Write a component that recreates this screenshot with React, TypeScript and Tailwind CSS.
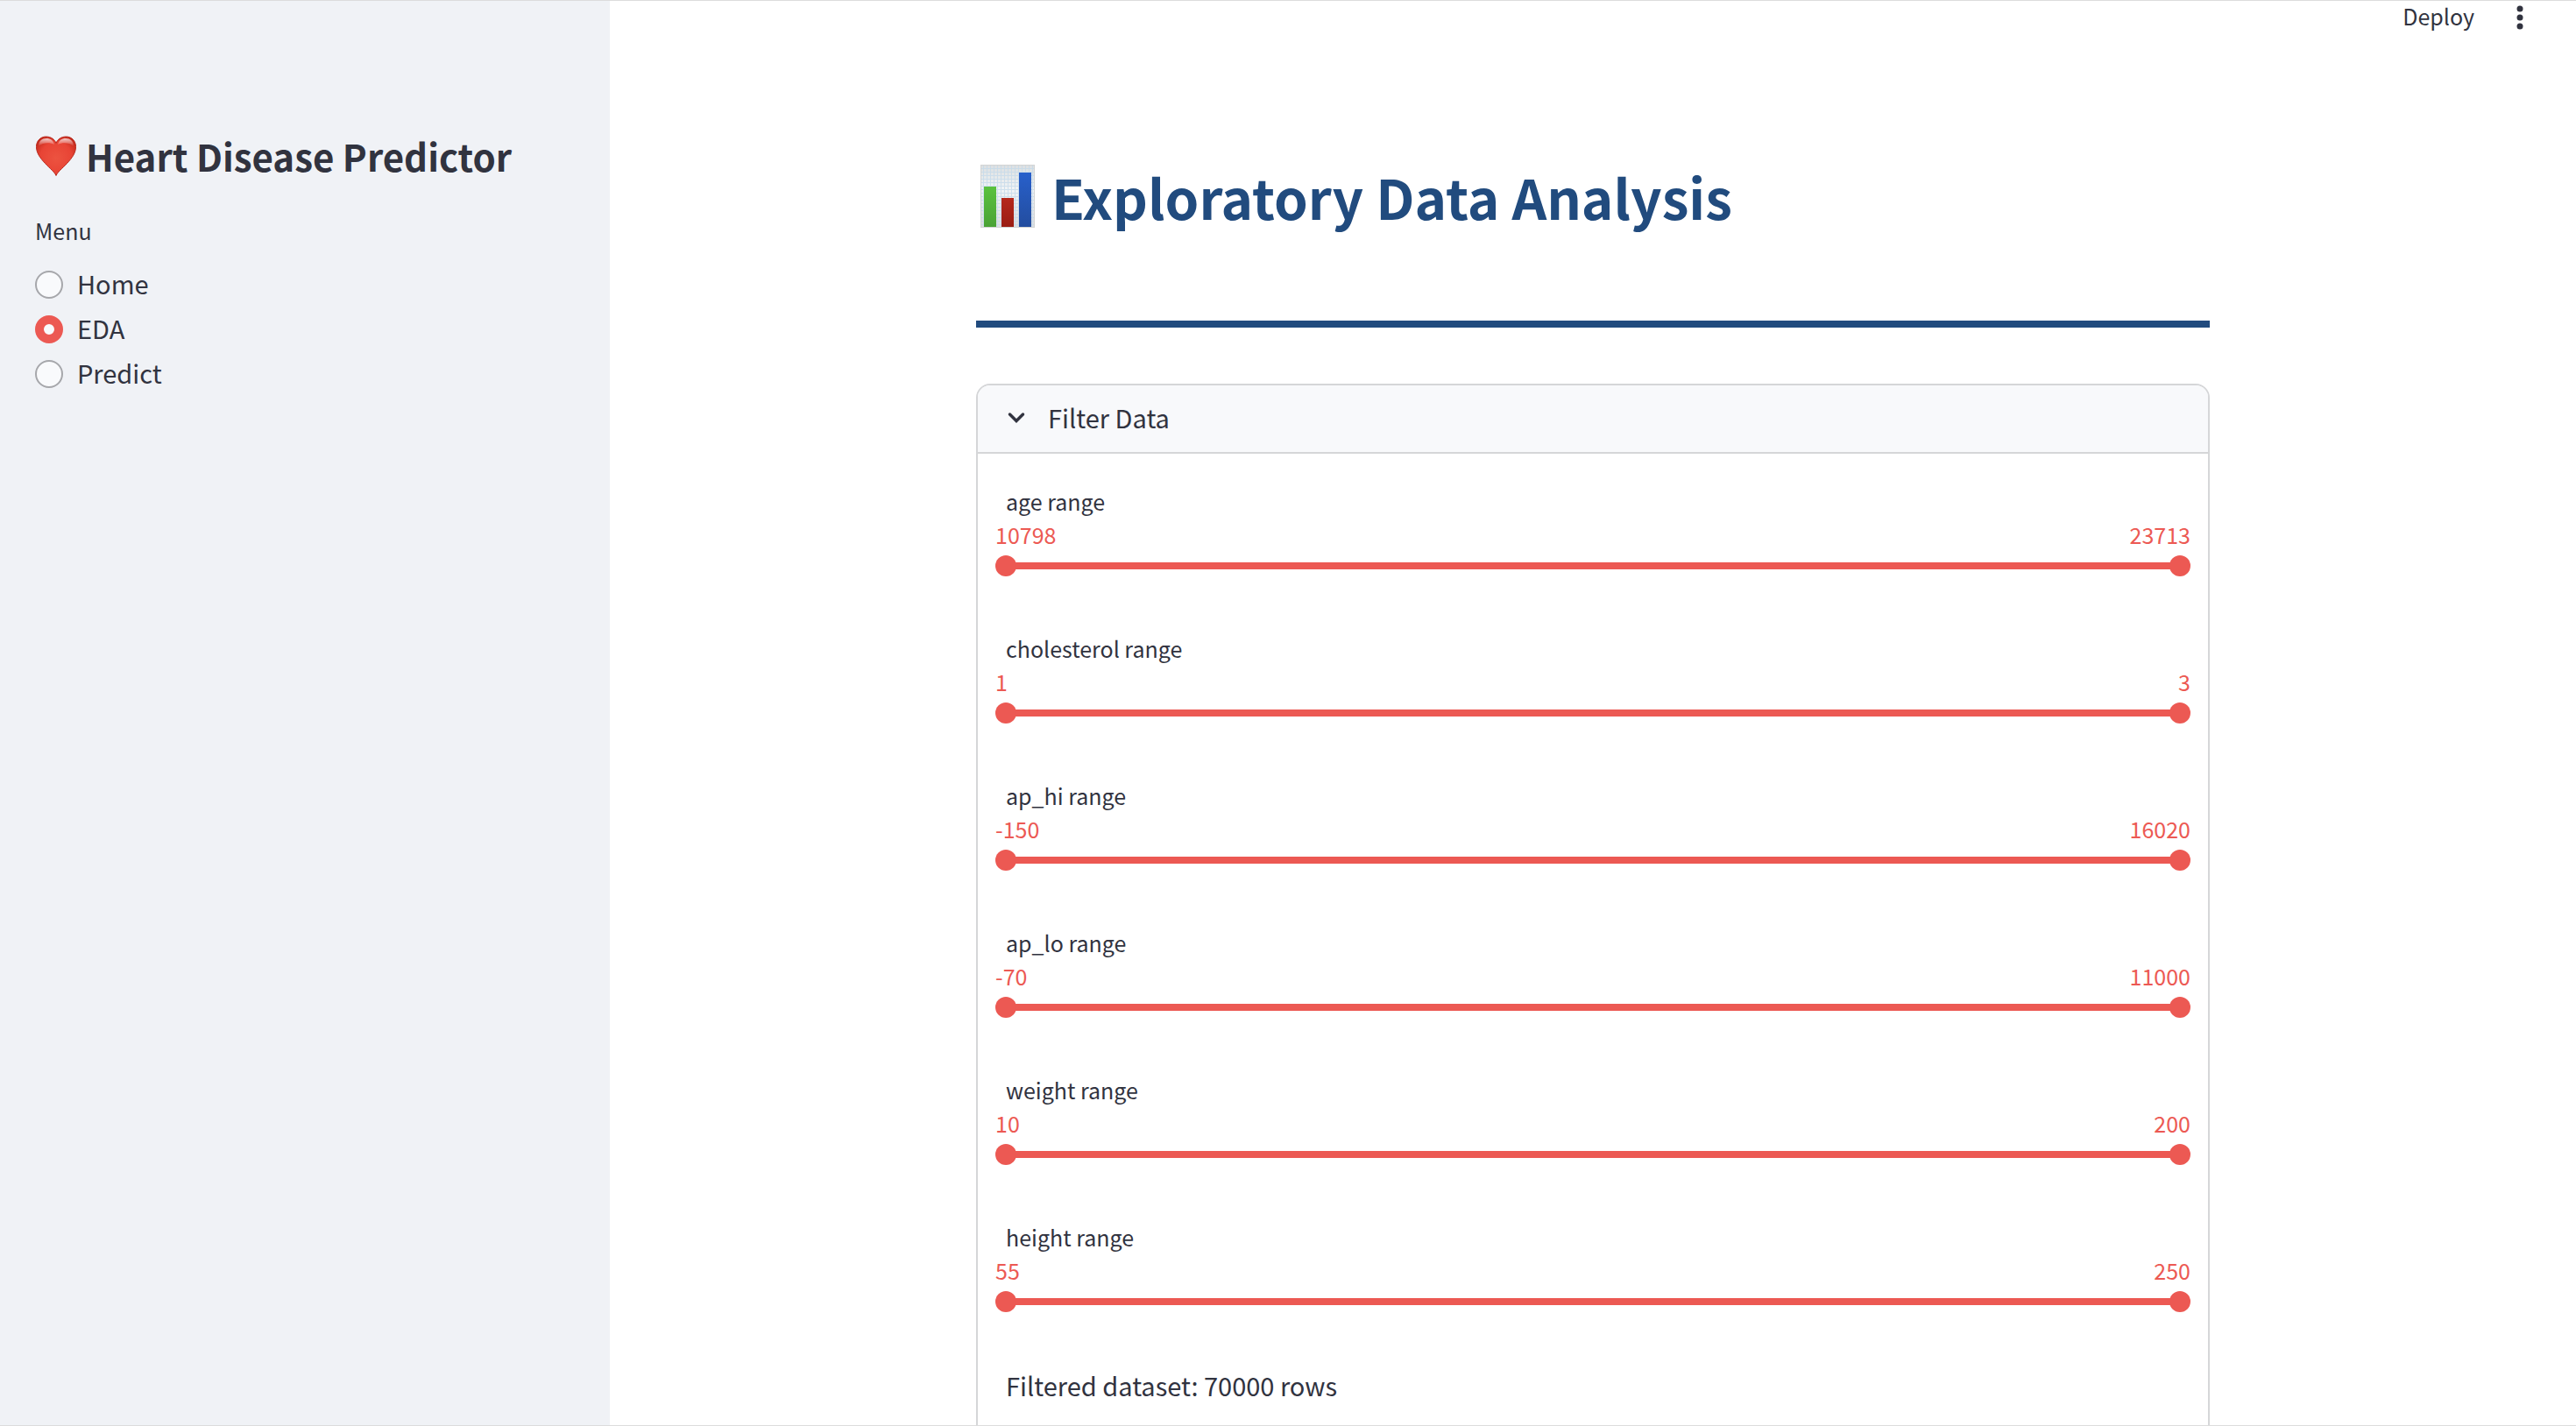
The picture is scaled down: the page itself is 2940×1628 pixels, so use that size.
import { useState } from "react";

type Feature = { name: string; min: number; max: number };

const FEATURES: Feature[] = [
  { name: "age", min: 10798, max: 23713 },
  { name: "cholesterol", min: 1, max: 3 },
  { name: "ap_hi", min: -150, max: 16020 },
  { name: "ap_lo", min: -70, max: 11000 },
  { name: "weight", min: 10, max: 200 },
  { name: "height", min: 55, max: 250 },
];

const PAGES = ["Home", "EDA", "Predict"];

const THUMB_INPUT =
  "pointer-events-none absolute inset-0 m-0 h-6 w-full appearance-none bg-transparent outline-none [&::-webkit-slider-thumb]:pointer-events-auto [&::-webkit-slider-thumb]:size-6 [&::-webkit-slider-thumb]:cursor-pointer [&::-webkit-slider-thumb]:appearance-none [&::-webkit-slider-thumb]:rounded-full [&::-webkit-slider-thumb]:bg-[#ec5953]";

function HeartIcon() {
  return (
    <svg viewBox="0 0 48 48" className="size-12 shrink-0" aria-hidden="true">
      <defs>
        <radialGradient id="heart-fill" cx="0.5" cy="0.55" r="0.62">
          <stop offset="0" stopColor="#ec5340" />
          <stop offset="0.65" stopColor="#e84435" />
          <stop offset="1" stopColor="#c42a1c" />
        </radialGradient>
        <linearGradient id="heart-shine" x1="0" y1="0" x2="0" y2="1">
          <stop offset="0" stopColor="#ffffff" stopOpacity="0.75" />
          <stop offset="1" stopColor="#ffffff" stopOpacity="0" />
        </linearGradient>
      </defs>
      <path
        d="M24 46.500C22.500 42.500 17 38.500 11.500 32.500C5.500 26 1.500 20.500 1.500 13.500C1.500 6.500 6.500 2 12.500 2C18 2 22.500 5 24 9.500C25.500 5 30 2 35.500 2C41.500 2 46.500 6.500 46.500 13.500C46.500 20.500 42.500 26 36.500 32.500C31 38.500 25.500 42.500 24 46.500Z"
        fill="url(#heart-fill)"
        stroke="#b92a1e"
        strokeWidth="1"
      />
      <path d="M4 13C4 7 8 4 13 4C17.500 4 21 6.500 22 11C17 8.500 9 8.500 4 13Z" fill="url(#heart-shine)" />
      <path d="M44 13C44 7 40 4 35 4C30.500 4 27 6.500 26 11C31 8.500 39 8.500 44 13Z" fill="url(#heart-shine)" />
    </svg>
  );
}

function BarChartIcon() {
  return (
    <svg viewBox="0 0 64 72" className="h-[72px] w-16 shrink-0" aria-hidden="true">
      <defs>
        <pattern id="chart-grid" width="4" height="4" patternUnits="userSpaceOnUse">
          <path d="M0 .5H4M.5 0V4" stroke="#c3d9ea" strokeWidth="1" />
        </pattern>
        <linearGradient id="chart-paper" x1="0" y1="0" x2="0" y2="1">
          <stop offset="0" stopColor="#dcdfe0" />
          <stop offset="0.4" stopColor="#f1f4f6" />
          <stop offset="1" stopColor="#dddddf" />
        </linearGradient>
        <linearGradient id="chart-green" x1="0" y1="0" x2="0" y2="1">
          <stop offset="0" stopColor="#5bc23e" />
          <stop offset="1" stopColor="#4aa235" />
        </linearGradient>
        <linearGradient id="chart-red" x1="0" y1="0" x2="0" y2="1">
          <stop offset="0" stopColor="#b5281c" />
          <stop offset="1" stopColor="#9a1d13" />
        </linearGradient>
        <linearGradient id="chart-blue" x1="0" y1="0" x2="0" y2="1">
          <stop offset="0" stopColor="#2860cb" />
          <stop offset="1" stopColor="#234d9f" />
        </linearGradient>
      </defs>
      <rect x="1" width="62" height="72" fill="url(#chart-paper)" />
      <rect x="1" width="62" height="72" fill="url(#chart-grid)" opacity="0.75" />
      <rect x="1.5" y=".5" width="61" height="71" fill="none" stroke="#d3d4d4" />
      <rect x="5" y="25" width="14" height="46" fill="url(#chart-green)" />
      <rect x="25" y="38" width="14" height="33" fill="url(#chart-red)" />
      <rect x="45" y="9" width="14" height="62" fill="url(#chart-blue)" />
    </svg>
  );
}

function RangeSlider({ name, min, max }: Feature) {
  const [low, setLow] = useState(min);
  const [high, setHigh] = useState(max);
  const span = max - min;

  return (
    <div role="group" aria-labelledby={`${name}-label`}>
      <div id={`${name}-label`} className="text-[25px] leading-10">
        {name} range
      </div>
      <div className="-mx-3 flex justify-between text-[25px] leading-9 text-[#ec5953]">
        <output>{low}</output>
        <output>{high}</output>
      </div>
      <div className="relative -mx-3 mt-1.5 flex h-6 items-center px-3">
        <div className="h-2 w-full rounded-full bg-[#d5d6da]">
          <div
            className="h-2 bg-[#ec5953]"
            style={{
              marginLeft: `${((low - min) / span) * 100}%`,
              width: `${((high - low) / span) * 100}%`,
            }}
          />
        </div>
        <input
          type="range"
          aria-label={`${name} minimum`}
          min={min}
          max={max}
          value={low}
          onChange={(e) => setLow(Math.min(Number(e.target.value), high))}
          className={THUMB_INPUT}
        />
        <input
          type="range"
          aria-label={`${name} maximum`}
          min={min}
          max={max}
          value={high}
          onChange={(e) => setHigh(Math.max(Number(e.target.value), low))}
          className={THUMB_INPUT}
        />
      </div>
    </div>
  );
}

function Sidebar() {
  const [page, setPage] = useState("EDA");

  return (
    <aside className="w-[696px] shrink-0 bg-[#f0f2f6] px-10 pt-[147px]">
      <h2 className="flex items-center gap-2.5 text-[42px] leading-[60px] font-bold">
        <HeartIcon />
        Heart Disease Predictor
      </h2>
      <fieldset className="mt-[35px]">
        <legend className="text-[25px] leading-10">Menu</legend>
        <div className="mt-4 flex flex-col">
          {PAGES.map((item) => (
            <label key={item} className="flex h-[51px] cursor-pointer items-center gap-4 text-[29px] leading-10">
              <input
                type="radio"
                name="page"
                value={item}
                checked={page === item}
                onChange={() => setPage(item)}
                className="size-8 shrink-0 appearance-none rounded-full border-2 border-[#a6a7ab] bg-[#f9fafc] checked:border-[10px] checked:border-[#ec5953]"
              />
              <span className="pb-1">{item}</span>
            </label>
          ))}
        </div>
      </fieldset>
    </aside>
  );
}

export default function App() {
  const [open, setOpen] = useState(true);

  return (
    <div className="flex h-screen overflow-hidden border-y border-[#dcdcdc] bg-white font-['Noto_Sans_CJK_SC',sans-serif] text-[#31333f]">
      <Sidebar />
      <main className="min-w-0 flex-1 overflow-y-auto [scrollbar-width:none]">
        <header className="flex h-9 items-center justify-end gap-8 pr-11">
          <button type="button" className="pb-0.5 text-[25px] leading-8">
            Deploy
          </button>
          <button type="button" aria-label="Main menu" className="flex w-10 justify-center pt-0.5">
            <svg viewBox="0 0 8 28" className="h-7 w-2" fill="currentColor" aria-hidden="true">
              <circle cx="4" cy="4" r="3.500" />
              <circle cx="4" cy="14" r="3.500" />
              <circle cx="4" cy="24" r="3.500" />
            </svg>
          </button>
        </header>

        <div className="mx-auto max-w-[1408px] pt-[147px] pb-40">
          <h1 className="flex items-center gap-[18px] pl-1 text-[62px] leading-20 font-bold text-[#214b7e]">
            <BarChartIcon />
            Exploratory Data Analysis
          </h1>
          <hr className="mt-[102px] border-t-8 border-[#214b7e]" />

          <section className="mt-16 overflow-hidden rounded-2xl border-2 border-[#d5d6d8]">
            <button
              type="button"
              aria-expanded={open}
              onClick={() => setOpen(!open)}
              className="flex w-full items-center gap-5 bg-[#f8f9fb] px-7 pb-1 text-left text-[29px] leading-[72px]"
            >
              <svg
                viewBox="0 0 32 32"
                className="size-8"
                fill="none"
                stroke="currentColor"
                strokeWidth="3.500"
                strokeLinecap="round"
                aria-hidden="true"
              >
                <path d="M8.500 13L16 20.500L23.500 13" />
              </svg>
              Filter Data
            </button>
            {open && (
              <div className="border-t-2 border-[#d5d6d8] px-8 pt-[34px] pb-40">
                <div className="flex flex-col gap-[62px]">
                  {FEATURES.map((feature) => (
                    <RangeSlider key={feature.name} {...feature} />
                  ))}
                </div>
                <p className="mt-[59px] text-[29px] leading-12">Filtered dataset: 70000 rows</p>
              </div>
            )}
          </section>
        </div>
      </main>
    </div>
  );
}
